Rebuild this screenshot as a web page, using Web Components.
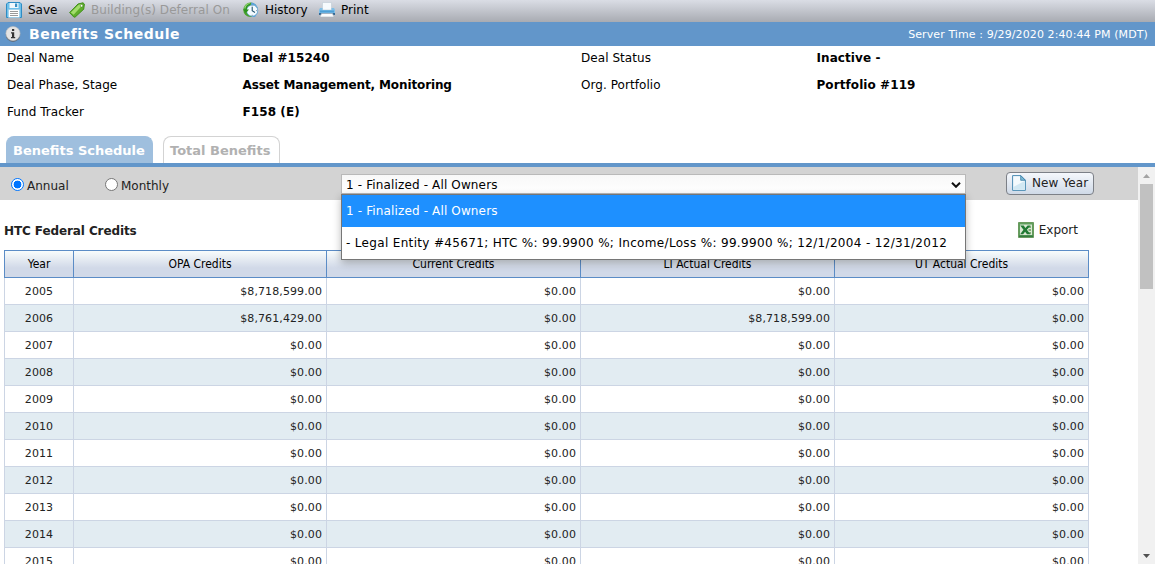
<!DOCTYPE html>
<html lang="en">
<head>
<meta charset="utf-8">
<title>Benefits Schedule</title>
<style>
    html, body {
        margin: 0;
        height: 100%;
        overflow: hidden;
        background: #fff;
        font-family: "DejaVu Sans", Verdana, sans-serif;
        font-size: 12px;
        color: #000;
    }
</style>
</head>
<body>
<benefits-page></benefits-page>

<script>
const icons = {
    save: `<svg width="16" height="16" viewBox="0 0 16 16">
        <path d="M.5 2 2 .5h12L15.5 2v13.5H.5z" fill="#6fc0ea" stroke="#2f8cc4"/>
        <path d="M3.5 1h9v5h-9z" fill="#f1f8fc"/>
        <path d="M9 1.5h2.2V5H9z" fill="#3b8fc4"/>
        <path d="M2.5 7.5h11v8h-11z" fill="#fff" stroke="#9ccbe6" stroke-width=".6"/>
        <path d="M4 9.5h8M4 11.5h8M4 13.5h8" stroke="#9a9a9a"/>
    </svg>`,
    tag: `<svg width="16" height="16" viewBox="0 0 16 16">
        <path d="M.6 10.6 9 2l5-1.2 1.4 1.3-.7 5.1L6 15.2 4.8 15z" fill="#5fae2b" stroke="#418f1c" stroke-linejoin="round"/>
        <path d="m1.8 10.6 7.8-7.9 3.4-.8-.8 2.6-7.6 8.3z" fill="#a3dc6c"/>
        <circle cx="12.6" cy="3.8" r="1.3" fill="#fff" stroke="#488c21" stroke-width=".6"/>
    </svg>`,
    history: `<svg width="16" height="16" viewBox="0 0 16 16">
        <circle cx="7.5" cy="7.8" r="7.2" fill="#46a02c"/>
        <path d="M8 .6a7.3 7.3 0 0 1 7 7v3L12 15H9z" fill="#5da2dc"/>
        <path d="M1.2 5 4 1.8l3-.7-2 4-3 2z" fill="#a0dc80"/>
        <circle cx="9.2" cy="8.6" r="5.6" fill="#f4fbff" stroke="#6aa6d0" stroke-width=".8"/>
        <path d="M9.2 5v3.8l2.8 1.6" fill="none" stroke="#26556e" stroke-width="1.1"/>
        <path d="M9.2 3.6v.9M13.3 8.6h.9M9.2 12.8v.9" stroke="#667f8e"/>
        <path d="M0 7.5h6L3 11z" fill="#2e9420"/>
        <path d="M3 8c0-3 1.6-5 4-5.5" fill="none" stroke="#2e9420" stroke-width="1.4"/>
    </svg>`,
    print: `<svg width="16" height="16" viewBox="0 0 16 16">
        <path d="M3.5.5h9V8h-9z" fill="#f6fafd" stroke="#c3ced8" stroke-width=".7"/>
        <path d="M1 6h2.5v2h9V6H15l1 2v4.5H0V8z" fill="#7fbfe8"/>
        <path d="M1 8.5h14v2H1z" fill="#4d9fd6"/>
        <path d="M0 11h16v2H0z" fill="#356a96"/>
        <path d="M2.5 11.5h11L15 15H1z" fill="#fbfcfd" stroke="#aab4bd" stroke-width=".6"/>
    </svg>`,
    info: `<svg width="16" height="16" viewBox="0 0 16 16">
        <circle cx="8" cy="8.7" r="7.2" fill="#5d6a78"/>
        <circle cx="8" cy="7.6" r="7.1" fill="#e3e3e3" stroke="#bdbdbd" stroke-width=".6"/>
        <path d="M7 3h2.2v2H7zM6 6.2h3.2V11h1v1.2H6V11h1V7.4H6z" fill="#333"/>
    </svg>`,
    file: `<svg width="14" height="16" viewBox="0 0 14 16">
        <path d="M.6.6h8.2l4.6 4.6v10.2H.6z" fill="#f4fafd" stroke="#4a8cb3"/>
        <path d="m1.2 12 11.6-6v8.8H1.2z" fill="#d2e8f3"/>
        <path d="M8.7.6v4.7h4.7z" fill="#7dbbd9" stroke="#3b7fa6" stroke-width=".8"/>
    </svg>`,
    excel: `<svg width="16" height="16" viewBox="0 0 16 16">
        <path d="M.5.5h15v15H.5z" fill="#5f9e5c" stroke="#6b9a5f"/>
        <path d="M2 2.5h12v10.5H2z" fill="#dbe8d4"/>
        <path d="M10.5 4H13v2h-2.500zM10.500 7H13v2h-2.500zM10.500 10H13v2h-2.500z" fill="#7fae76"/>
        <path d="M2.200 3.500h3.500L7.400 6l2.200-2.500h3L8.900 7.800l3.500 4.500H9L7.100 9.800l-2 2.500h-3l3.400-4.500z" fill="#217a34"/>
        <path d="M1 13.500h14V15H1z" fill="#347d40"/>
    </svg>`
};

class AppIcon extends HTMLElement {
    constructor() {
        super();
        this.attachShadow({ mode: 'open' });
    }

    connectedCallback() {
        this.shadowRoot.innerHTML = `
            <style>
            :host { display: block; flex: none; }
            svg { display: block; }
            </style>
            ${icons[this.getAttribute('name')]}
        `;
    }
}
customElements.define('app-icon', AppIcon);

class ToolItem extends HTMLElement {
    constructor() {
        super();
        this.attachShadow({ mode: 'open' });
    }

    connectedCallback() {
        this.shadowRoot.innerHTML = `
            <style>
            :host { display: flex; align-items: center; gap: 6px; white-space: nowrap; }
            :host([disabled]) { color: #999; }
            </style>
            <app-icon name="${this.getAttribute('icon')}"></app-icon>
            <span><slot></slot></span>
        `;
    }
}
customElements.define('tool-item', ToolItem);

class AppHeader extends HTMLElement {
    constructor() {
        super();
        this.attachShadow({ mode: 'open' });
        this.shadowRoot.innerHTML = `
            <style>
            :host { display: block; }
            #toolbar {
                display: flex;
                height: 22px;
                box-sizing: border-box;
                padding: 0 6px 2px;
                background: linear-gradient(#dadde5, #a8abb2);
            }
            #save { width: 63px; }
            #tag { width: 174px; letter-spacing: .06px; }
            #history { width: 76px; }
            #title {
                display: flex;
                align-items: center;
                height: 24px;
                padding: 0 7px 0 5px;
                background: #6296ca;
                color: #fff;
            }
            h1 { margin: 0 auto 0 8px; font-size: 14px; letter-spacing: .5px; }
            #time { font-size: 11px; letter-spacing: .1px; }
            </style>
            <div id="toolbar">
                <tool-item id="save" icon="save">Save</tool-item>
                <tool-item id="tag" icon="tag" disabled>Building(s) Deferral On</tool-item>
                <tool-item id="history" icon="history">History</tool-item>
                <tool-item id="print" icon="print">Print</tool-item>
            </div>
            <div id="title">
                <app-icon name="info"></app-icon>
                <h1>Benefits Schedule</h1>
                <span id="time">Server Time : 9/29/2020 2:40:44 PM (MDT)</span>
            </div>
        `;
    }
}
customElements.define('app-header', AppHeader);

class DealDetails extends HTMLElement {
    constructor() {
        super();
        this.attachShadow({ mode: 'open' });
        this.shadowRoot.innerHTML = `
            <style>
            :host {
                display: grid;
                grid-template-columns: 235.5px 338.5px 235.5px 1fr;
                grid-auto-rows: 27px;
                align-items: center;
                height: 90px;
                padding-left: 7px;
                margin-top: -2px;
            }
            span { letter-spacing: .06px; }
            b { letter-spacing: .08px; }
            #phase { letter-spacing: -.12px; }
            </style>
            <span>Deal Name</span><b>Deal #15240</b>
            <span>Deal Status</span><b>Inactive -</b>
            <span>Deal Phase, Stage</span><b id="phase">Asset Management, Monitoring</b>
            <span>Org. Portfolio</span><b>Portfolio #119</b>
            <span>Fund Tracker</span><b>F158 (E)</b>
        `;
    }
}
customElements.define('deal-details', DealDetails);

class TabBar extends HTMLElement {
    constructor() {
        super();
        this.attachShadow({ mode: 'open' });
        this.shadowRoot.innerHTML = `
            <style>
            :host {
                display: flex;
                gap: 10px;
                padding: 2px 6px 0;
                border-bottom: 4px solid #6296ca;
                font-size: 13px;
                font-weight: bold;
            }
            .tab {
                box-sizing: border-box;
                width: 117px;
                height: 27px;
                padding: 6px 0 0 6px;
                border: 1px solid #d3d3d3;
                border-bottom: 0;
                border-radius: 8px 8px 0 0;
                white-space: nowrap;
                color: #b1b1b1;
            }
            .active { width: 147px; background: #9fbfde; border-color: #9fbfde; color: #fff; }
            </style>
            <div class="tab active">Benefits Schedule</div>
            <div class="tab">Total Benefits</div>
        `;
    }
}
customElements.define('tab-bar', TabBar);

class RadioOption extends HTMLElement {
    constructor() {
        super();
        this.attachShadow({ mode: 'open' });
        this.shadowRoot.innerHTML = `
            <style>
            :host { display: flex; gap: 3px; color: #222; }
            i {
                box-sizing: border-box;
                width: 13px;
                height: 13px;
                border: 1px solid #767676;
                border-radius: 50%;
                background: #fff;
            }
            span { padding-top: 1px; line-height: 14px; }
            :host([checked]) i { border-color: #0075ff; background: radial-gradient(circle, #0075ff 3.6px, #fff 4.2px); }
            </style>
            <i></i><span><slot></slot></span>
        `;
    }
}
customElements.define('radio-option', RadioOption);

class OwnerSelect extends HTMLElement {
    constructor() {
        super();
        this.attachShadow({ mode: 'open' });
        this.shadowRoot.innerHTML = `
            <style>
            :host { display: block; position: relative; width: 625px; white-space: nowrap; letter-spacing: .14px; }
            #field {
                display: flex;
                align-items: center;
                justify-content: space-between;
                box-sizing: border-box;
                height: 20px;
                padding: 1px 4px 0;
                border: 1px solid #b9b9b9;
                background: linear-gradient(#f8f8f8, #fff);
            }
            #list {
                position: absolute;
                z-index: 2;
                top: 20px;
                left: 0;
                right: 0;
                border: 1px solid #767676;
                background: #fff;
                box-shadow: 0 3px 8px rgba(0, 0, 0, .28);
            }
            .option { height: 32px; line-height: 33px; padding-left: 4px; }
            .selected { background: #1e90ff; color: #fff; }
            .entity { letter-spacing: .33px; }
            </style>
            <div id="field">
                <span>1 - Finalized - All Owners</span>
                <svg width="10" height="6" viewBox="0 0 10 6"><path d="m1 .8 4 4 4-4" fill="none" stroke="#111" stroke-width="2"/></svg>
            </div>
            <div id="list">
                <div class="option selected">1 - Finalized - All Owners</div>
                <div class="option entity">- Legal Entity #45671; HTC %: 99.9900 %; Income/Loss %: 99.9900 %; 12/1/2004 - 12/31/2012</div>
            </div>
        `;
    }
}
customElements.define('owner-select', OwnerSelect);

class FilterBar extends HTMLElement {
    constructor() {
        super();
        this.attachShadow({ mode: 'open' });
        this.shadowRoot.innerHTML = `
            <style>
            :host {
                display: flex;
                align-items: flex-start;
                box-sizing: border-box;
                height: 33px;
                padding-left: 11px;
                background: #d3d3d3;
            }
            radio-option { margin-top: 11px; }
            #annual { width: 94px; }
            #monthly { width: 225px; margin-right: 11px; }
            owner-select { margin-top: 7px; }
            #new {
                display: flex;
                align-items: center;
                gap: 6px;
                box-sizing: border-box;
                width: 88px;
                height: 23px;
                margin: 5px 0 0 40px;
                padding: 0 0 1px 5px;
                border: 1px solid #7c8087;
                border-radius: 4px;
                background: linear-gradient(#f5f8fc, #cfd9e7);
                color: #222;
                font: inherit;
                letter-spacing: .12px;
                white-space: nowrap;
            }
            </style>
            <radio-option id="annual" checked>Annual</radio-option>
            <radio-option id="monthly">Monthly</radio-option>
            <owner-select></owner-select>
            <button id="new"><app-icon name="file"></app-icon><span>New Year</span></button>
        `;
    }
}
customElements.define('filter-bar', FilterBar);

class CreditsTable extends HTMLElement {
    constructor() {
        super();
        this.attachShadow({ mode: 'open' });
    }

    connectedCallback() {
        this.render();
    }

    render() {
        const amounts = {
            2005: ['$8,718,599.00', '$0.00', '$0.00', '$0.00'],
            2006: ['$8,761,429.00', '$0.00', '$8,718,599.00', '$0.00']
        };
        let rows = '';
        for (let year = 2005; year <= 2015; year++) {
            const cells = amounts[year] || ['$0.00', '$0.00', '$0.00', '$0.00'];
            rows += `<div class="row"><span>${year}</span>${cells.map(c => `<span>${c}</span>`).join('')}</div>`;
        }

        this.shadowRoot.innerHTML = `
            <style>
            :host { display: block; width: 1085px; color: #222; font-size: 11px; }
            .row {
                display: grid;
                grid-template-columns: 70px 253px 254px 254px 254px;
                height: 27px;
                line-height: 28px;
                letter-spacing: .1px;
            }
            .row span {
                box-sizing: border-box;
                height: 27px;
                border-right: 1px solid #ccd5e4;
                border-bottom: 1px solid #ccd5e4;
                padding-right: 4px;
                text-align: right;
            }
            .row span:first-child { border-left: 1px solid #ccd5e4; padding: 0; text-align: center; }
            .row:nth-of-type(odd) span { background: #e2ecf2; }
            .row.head {
                height: 28px;
                line-height: 27px;
                font-family: "DejaVu Sans Condensed", "DejaVu Sans", sans-serif;
                font-size: 12px;
                letter-spacing: 0;
                color: #000;
            }
            .row.head span {
                height: 28px;
                padding: 0;
                border: 1px solid #5b8cc6;
                border-left: 0;
                background: linear-gradient(#f8fcfc, #d1d9e8 65%, #d1d9e8);
                text-align: center;
            }
            .row.head span:first-child { border-left: 1px solid #5b8cc6; }
            </style>
            <div class="row head">
                <span>Year</span><span>OPA Credits</span><span>Current Credits</span><span>LI Actual Credits</span><span>UT Actual Credits</span>
            </div>
            ${rows}
        `;
    }
}
customElements.define('credits-table', CreditsTable);

class ScrollTrack extends HTMLElement {
    constructor() {
        super();
        this.attachShadow({ mode: 'open' });
        this.shadowRoot.innerHTML = `
            <style>
            :host {
                display: flex;
                flex-direction: column;
                align-items: center;
                width: 17px;
                box-sizing: border-box;
                padding: 7px 0 6px;
                background: #f1f1f1;
            }
            #thumb { width: 13px; height: 105px; margin: 6px 0 auto; background: #c1c1c1; }
            </style>
            <svg width="7" height="4"><path d="M0 4 3.5 0 7 4z" fill="#a3a3a3"/></svg>
            <div id="thumb"></div>
            <svg width="7" height="4"><path d="M0 0h7L3.5 4z" fill="#505050"/></svg>
        `;
    }
}
customElements.define('scroll-track', ScrollTrack);

class BenefitsPage extends HTMLElement {
    constructor() {
        super();
        this.attachShadow({ mode: 'open' });
        this.shadowRoot.innerHTML = `
            <style>
            :host { display: flex; flex-direction: column; height: 100vh; overflow: hidden; }
            #body { display: flex; flex: 1; min-height: 0; }
            main { flex: 1; min-width: 0; overflow: hidden; }
            #heading {
                display: flex;
                align-items: center;
                justify-content: space-between;
                height: 50px;
                padding: 10px 60px 0 4px;
                box-sizing: border-box;
                color: #222;
            }
            #heading h2 { margin: 0; padding-top: 1px; font-size: 12px; letter-spacing: -.1px; }
            #heading tool-item { gap: 5px; }
            credits-table { margin-left: 4px; }
            </style>
            <app-header></app-header>
            <deal-details></deal-details>
            <tab-bar></tab-bar>
            <div id="body">
                <main>
                    <filter-bar></filter-bar>
                    <div id="heading">
                        <h2>HTC Federal Credits</h2>
                        <tool-item icon="excel">Export</tool-item>
                    </div>
                    <credits-table></credits-table>
                </main>
                <scroll-track></scroll-track>
            </div>
        `;
    }
}
customElements.define('benefits-page', BenefitsPage);
</script>
</body>
</html>
